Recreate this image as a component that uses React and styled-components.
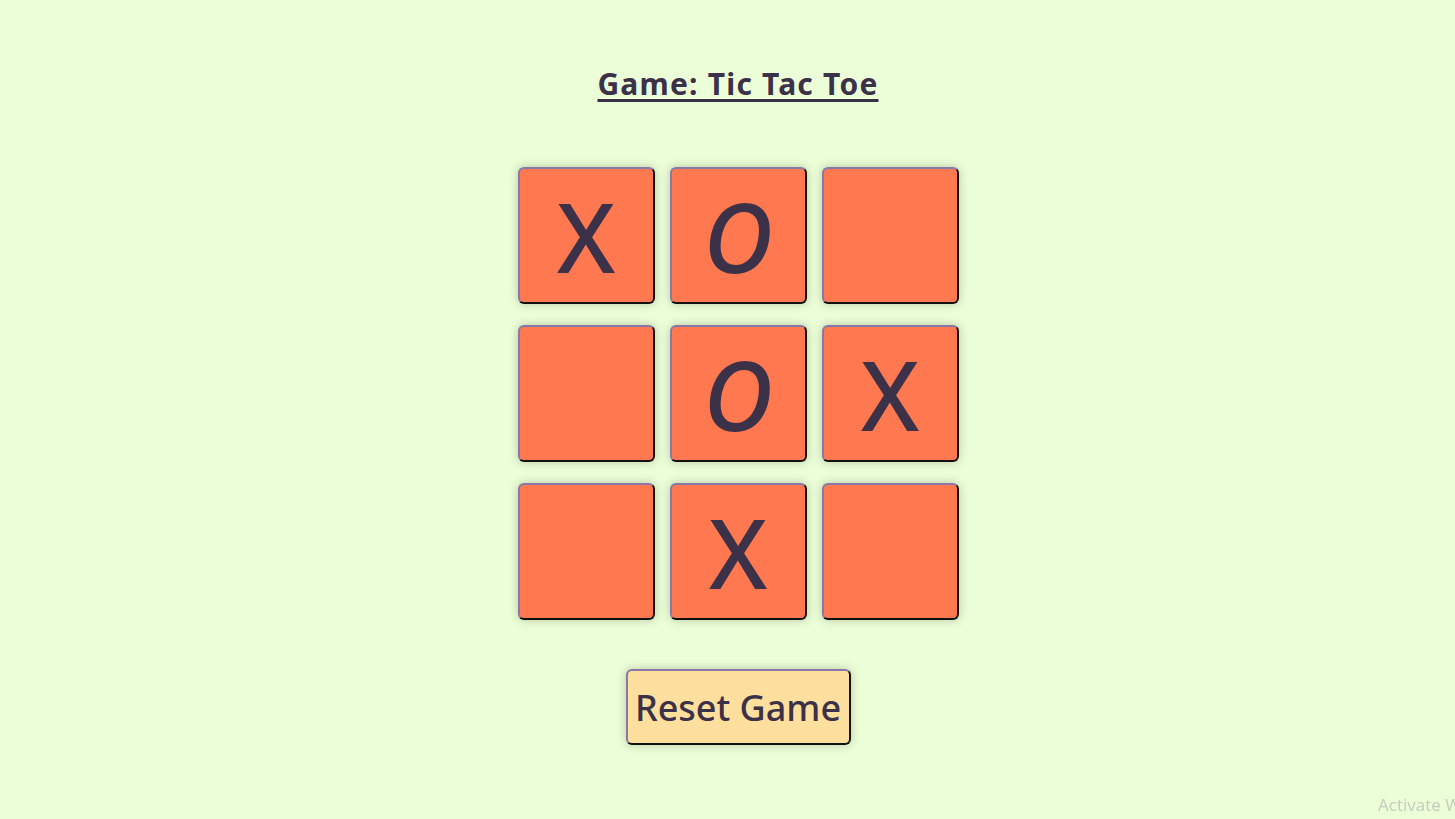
import React from "react";
import styled, { createGlobalStyle } from "styled-components";

const Global = createGlobalStyle`
  html, body { margin: 0; padding: 0; }
  body {
    background: #ecfed8;
    font-family: "Comic Sans MS", "Noto Sans", sans-serif;
    color: #3b3148;
    overflow: hidden;
  }
`;

const Page = styled.main`
  width: 1455px;
  height: 819px;
  box-sizing: border-box;
  padding-left: 21px;
  display: flex;
  flex-direction: column;
  align-items: center;
`;

const Title = styled.h1`
  margin: 64px 0 0;
  font-size: 30px;
  font-weight: 700;
  line-height: 40px;
  text-decoration: underline;
  text-decoration-thickness: 3px;
  text-underline-offset: 4px;
  letter-spacing: 1.2px;
`;

const Board = styled.div`
  margin-top: 63px;
  display: grid;
  grid-template-columns: repeat(3, 137px);
  grid-auto-rows: 137px;
  column-gap: 15px;
  row-gap: 21px;
`;

const Cell = styled.button`
  box-sizing: border-box;
  width: 137px;
  height: 137px;
  padding: 0;
  background: #ff7850;
  border-style: solid;
  border-width: 2px;
  border-color: #8878a8 #111 #111 #8878a8;
  border-radius: 6px;
  box-shadow: 0 0 10px rgba(60, 70, 40, 0.3);
  font-family: "Noto Sans", sans-serif;
  font-size: 96px;
  font-weight: 500;
  font-style: ${(p) => (p.$mark === "O" ? "italic" : "normal")};
  color: #3b3148;
  line-height: 1;
  display: flex;
  align-items: center;
  justify-content: center;
  cursor: pointer;
`;

const ResetButton = styled.button`
  margin-top: 49px;
  box-sizing: border-box;
  width: 225px;
  height: 76px;
  background: #ffdf9d;
  border-style: solid;
  border-width: 2px;
  border-color: #8878a8 #111 #111 #8878a8;
  border-radius: 6px;
  box-shadow: 0 0 10px rgba(60, 70, 40, 0.3);
  font-family: "Comic Sans MS", "Noto Sans", sans-serif;
  font-size: 36px;
  font-weight: 500;
  color: #3b3148;
  padding: 0;
  cursor: pointer;
`;

const Watermark = styled.div`
  position: fixed;
  left: 1378px;
  top: 793px;
  font-family: "Open Sans", "Noto Sans", sans-serif;
  font-size: 17px;
  color: #c5ccbd;
  white-space: nowrap;
  pointer-events: none;
`;

const board = ["X", "O", "", "", "O", "X", "", "X", ""];

export default function App() {
  return (
    <>
      <Global />
      <Page>
        <Title>Game: Tic Tac Toe</Title>
        <Board>
          {board.map((m, i) => (
            <Cell key={i} $mark={m}>
              {m}
            </Cell>
          ))}
        </Board>
        <ResetButton>Reset Game</ResetButton>
      </Page>
      <Watermark>Activate Windows</Watermark>
    </>
  );
}
